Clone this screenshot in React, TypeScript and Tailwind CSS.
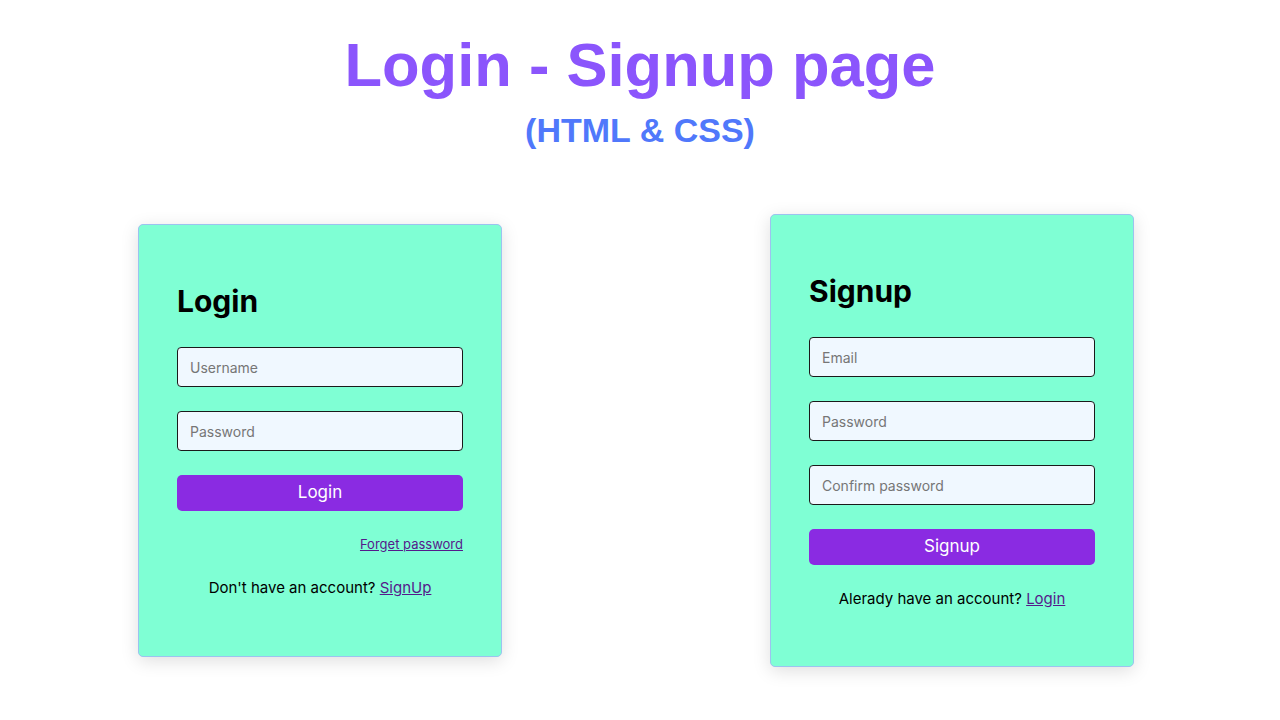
import React from "react";

const font = { fontFamily: "Inter, 'Noto Sans', sans-serif" };

function Field({ placeholder }: { placeholder: string }) {
  return (
    <input
      placeholder={placeholder}
      className="h-10 w-full rounded-[4px] border border-[#1a1a1a] bg-[#f0f8ff] px-3 text-[14px] text-black placeholder:text-[#767676] outline-none"
      style={font}
    />
  );
}

function Card({
  title,
  fields,
  button,
  bottom,
  children,
}: {
  title: string;
  fields: string[];
  button: string;
  bottom: string;
  children: React.ReactNode;
}) {
  return (
    <div
      className={`w-[364px] rounded-[5px] border border-[#9cc3ef] bg-[#7fffd4] px-[38px] pt-[58px] shadow-[0_4px_18px_rgba(0,0,0,0.13)] ${bottom}`}
      style={font}
    >
      <h2 className="h-9 text-[30px] font-bold leading-9 text-black">{title}</h2>
      <div className="mt-[28px] flex flex-col gap-6">
        {fields.map((f) => (
          <Field key={f} placeholder={f} />
        ))}
        <button className="h-9 w-full rounded-[5px] bg-[#8a2be2] text-[17px] text-white">
          {button}
        </button>
      </div>
      {children}
    </div>
  );
}

export default function App() {
  return (
    <div className="min-h-[720px] w-full bg-white">
      <div className="pt-[29px] text-center" style={{ fontFamily: "'Liberation Sans', Arial, sans-serif" }}>
        <h1 className="text-[61.5px] font-bold leading-[72px] text-[#8b55fc]">Login - Signup page</h1>
        <p className="mt-[9px] text-[34px] font-bold leading-10 text-[#5078fb]">(HTML &amp; CSS)</p>
      </div>

      <div className="mt-16 flex items-center gap-[268px] pl-[138px]">
        <Card title="Login" fields={["Username", "Password"]} button="Login" bottom="pb-[58px]">
          <div className="mt-[23px] text-right text-[13px] leading-5">
            <a href="#" className="text-[#551a8b] underline">
              Forget password
            </a>
          </div>
          <p className="mt-6 text-center text-[15px] leading-5 text-black">
            Don't have an account?{" "}
            <a href="#" className="text-[#551a8b] underline">
              SignUp
            </a>
          </p>
        </Card>

        <Card title="Signup" fields={["Email", "Password", "Confirm password"]} button="Signup" bottom="pb-[57px]">
          <p className="mt-6 text-center text-[15px] leading-5 text-black">
            Alerady have an account?{" "}
            <a href="#" className="text-[#551a8b] underline">
              Login
            </a>
          </p>
        </Card>
      </div>
    </div>
  );
}
